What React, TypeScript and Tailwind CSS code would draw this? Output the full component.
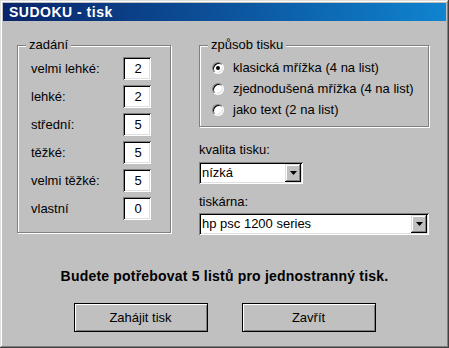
import React from "react";

const font = { fontFamily: '"Liberation Sans", Arial, sans-serif' };

const sunken =
  "bg-white shadow-[inset_1px_1px_#808080,inset_-1px_-1px_#ffffff,inset_2px_2px_#000000,inset_-2px_-2px_#dfdfdf]";

function GroupBox({
  label,
  className,
  children,
}: {
  label: string;
  className: string;
  children: React.ReactNode;
}) {
  return (
    <div
      className={`relative border border-[#808080] shadow-[1px_1px_0_#ffffff,inset_1px_1px_0_#ffffff] ${className}`}
    >
      <span className="absolute -top-[9px] left-[8px] bg-[#c0c0c0] px-[3px] text-[13px] leading-[16px]">
        {label}
      </span>
      {children}
    </div>
  );
}

function Spin({ label, value }: { label: string; value: string }) {
  return (
    <div className="flex h-[23px] items-center">
      <span className="w-[92px] text-[13px] leading-[16px]">{label}</span>
      <div
        className={`flex h-[23px] w-[28px] items-center justify-center pl-[2px] text-[13px] ${sunken}`}
      >
        {value}
      </div>
    </div>
  );
}

function Radio({ label, checked }: { label: string; checked?: boolean }) {
  return (
    <div className="flex h-[21px] items-center gap-[9px]">
      <span className="flex h-[12px] w-[12px] items-center justify-center rounded-full border border-t-[#808080] border-l-[#808080] border-b-white border-r-white bg-white shadow-[inset_1px_1px_0_#000000,inset_-1px_-1px_0_#dfdfdf]">
        {checked ? <span className="h-[4px] w-[4px] rounded-full bg-black" /> : null}
      </span>
      <span className="text-[13px] leading-[16px]">{label}</span>
    </div>
  );
}

function Combo({ value, className }: { value: string; className: string }) {
  return (
    <div className={`flex h-[22px] items-center p-[2px] ${sunken} ${className}`}>
      <span className="flex-1 pl-[1px] text-[13px] leading-[16px]">{value}</span>
      <span className="flex h-[18px] w-[16px] items-center justify-center bg-[#c0c0c0] shadow-[inset_-1px_-1px_#000000,inset_1px_1px_#dfdfdf,inset_-2px_-2px_#808080,inset_2px_2px_#ffffff]">
        <svg width="7" height="4" viewBox="0 0 7 4">
          <path d="M0 0h7L3.5 4z" fill="#000" />
        </svg>
      </span>
    </div>
  );
}

function Button({ label }: { label: string }) {
  return (
    <button
      type="button"
      className="h-[29px] w-[134px] border border-black bg-[#c0c0c0] text-[13px] shadow-[inset_1px_1px_#ffffff,inset_-1px_-1px_#808080]"
    >
      {label}
    </button>
  );
}

export default function App() {
  return (
    <div
      className="h-[348px] w-[449px] bg-[#c0c0c0] p-[3px] text-black shadow-[inset_-1px_-1px_#404040,inset_1px_1px_#dfdfdf,inset_-2px_-2px_#808080,inset_2px_2px_#ffffff]"
      style={font}
    >
      <div className="flex h-[18px] items-center bg-gradient-to-r from-[#0a246a] to-[#1084d0] pl-[6px] text-[14px] font-bold tracking-[0.5px] text-white">
        SUDOKU - tisk
      </div>

      <div className="flex pl-[14px]">
        <GroupBox label="zadání" className="mt-[24px] h-[188px] w-[154px] pl-[13px] pt-[11px]">
          <div className="flex flex-col gap-[5px]">
            <Spin label="velmi lehké:" value="2" />
            <Spin label="lehké:" value="2" />
            <Spin label="střední:" value="5" />
            <Spin label="těžké:" value="5" />
            <Spin label="velmi těžké:" value="5" />
            <Spin label="vlastní" value="0" />
          </div>
        </GroupBox>

        <div className="ml-[28px] flex w-[231px] flex-col">
          <GroupBox label="způsob tisku" className="mt-[24px] h-[82px] w-[230px] pl-[12px] pt-[11px]">
            <Radio label="klasická mřížka (4 na list)" checked />
            <Radio label="zjednodušená mřížka (4 na list)" />
            <Radio label="jako text (2 na list)" />
          </GroupBox>

          <span className="mt-[15px] text-[13px] leading-[16px]">kvalita tisku:</span>
          <Combo value="nízká" className="mt-[4px] w-[104px]" />
          <span className="mt-[10px] text-[13px] leading-[16px]">tiskárna:</span>
          <Combo value="hp psc 1200 series" className="mt-[3px] w-[230px]" />
        </div>
      </div>

      <p className="mt-[33px] text-center text-[14px] font-bold leading-[16px] tracking-[0.2px]">
        Budete potřebovat 5 listů pro jednostranný tisk.
      </p>

      <div className="mt-[19px] flex justify-center gap-[34px]">
        <Button label="Zahájit tisk" />
        <Button label="Zavřít" />
      </div>
    </div>
  );
}
